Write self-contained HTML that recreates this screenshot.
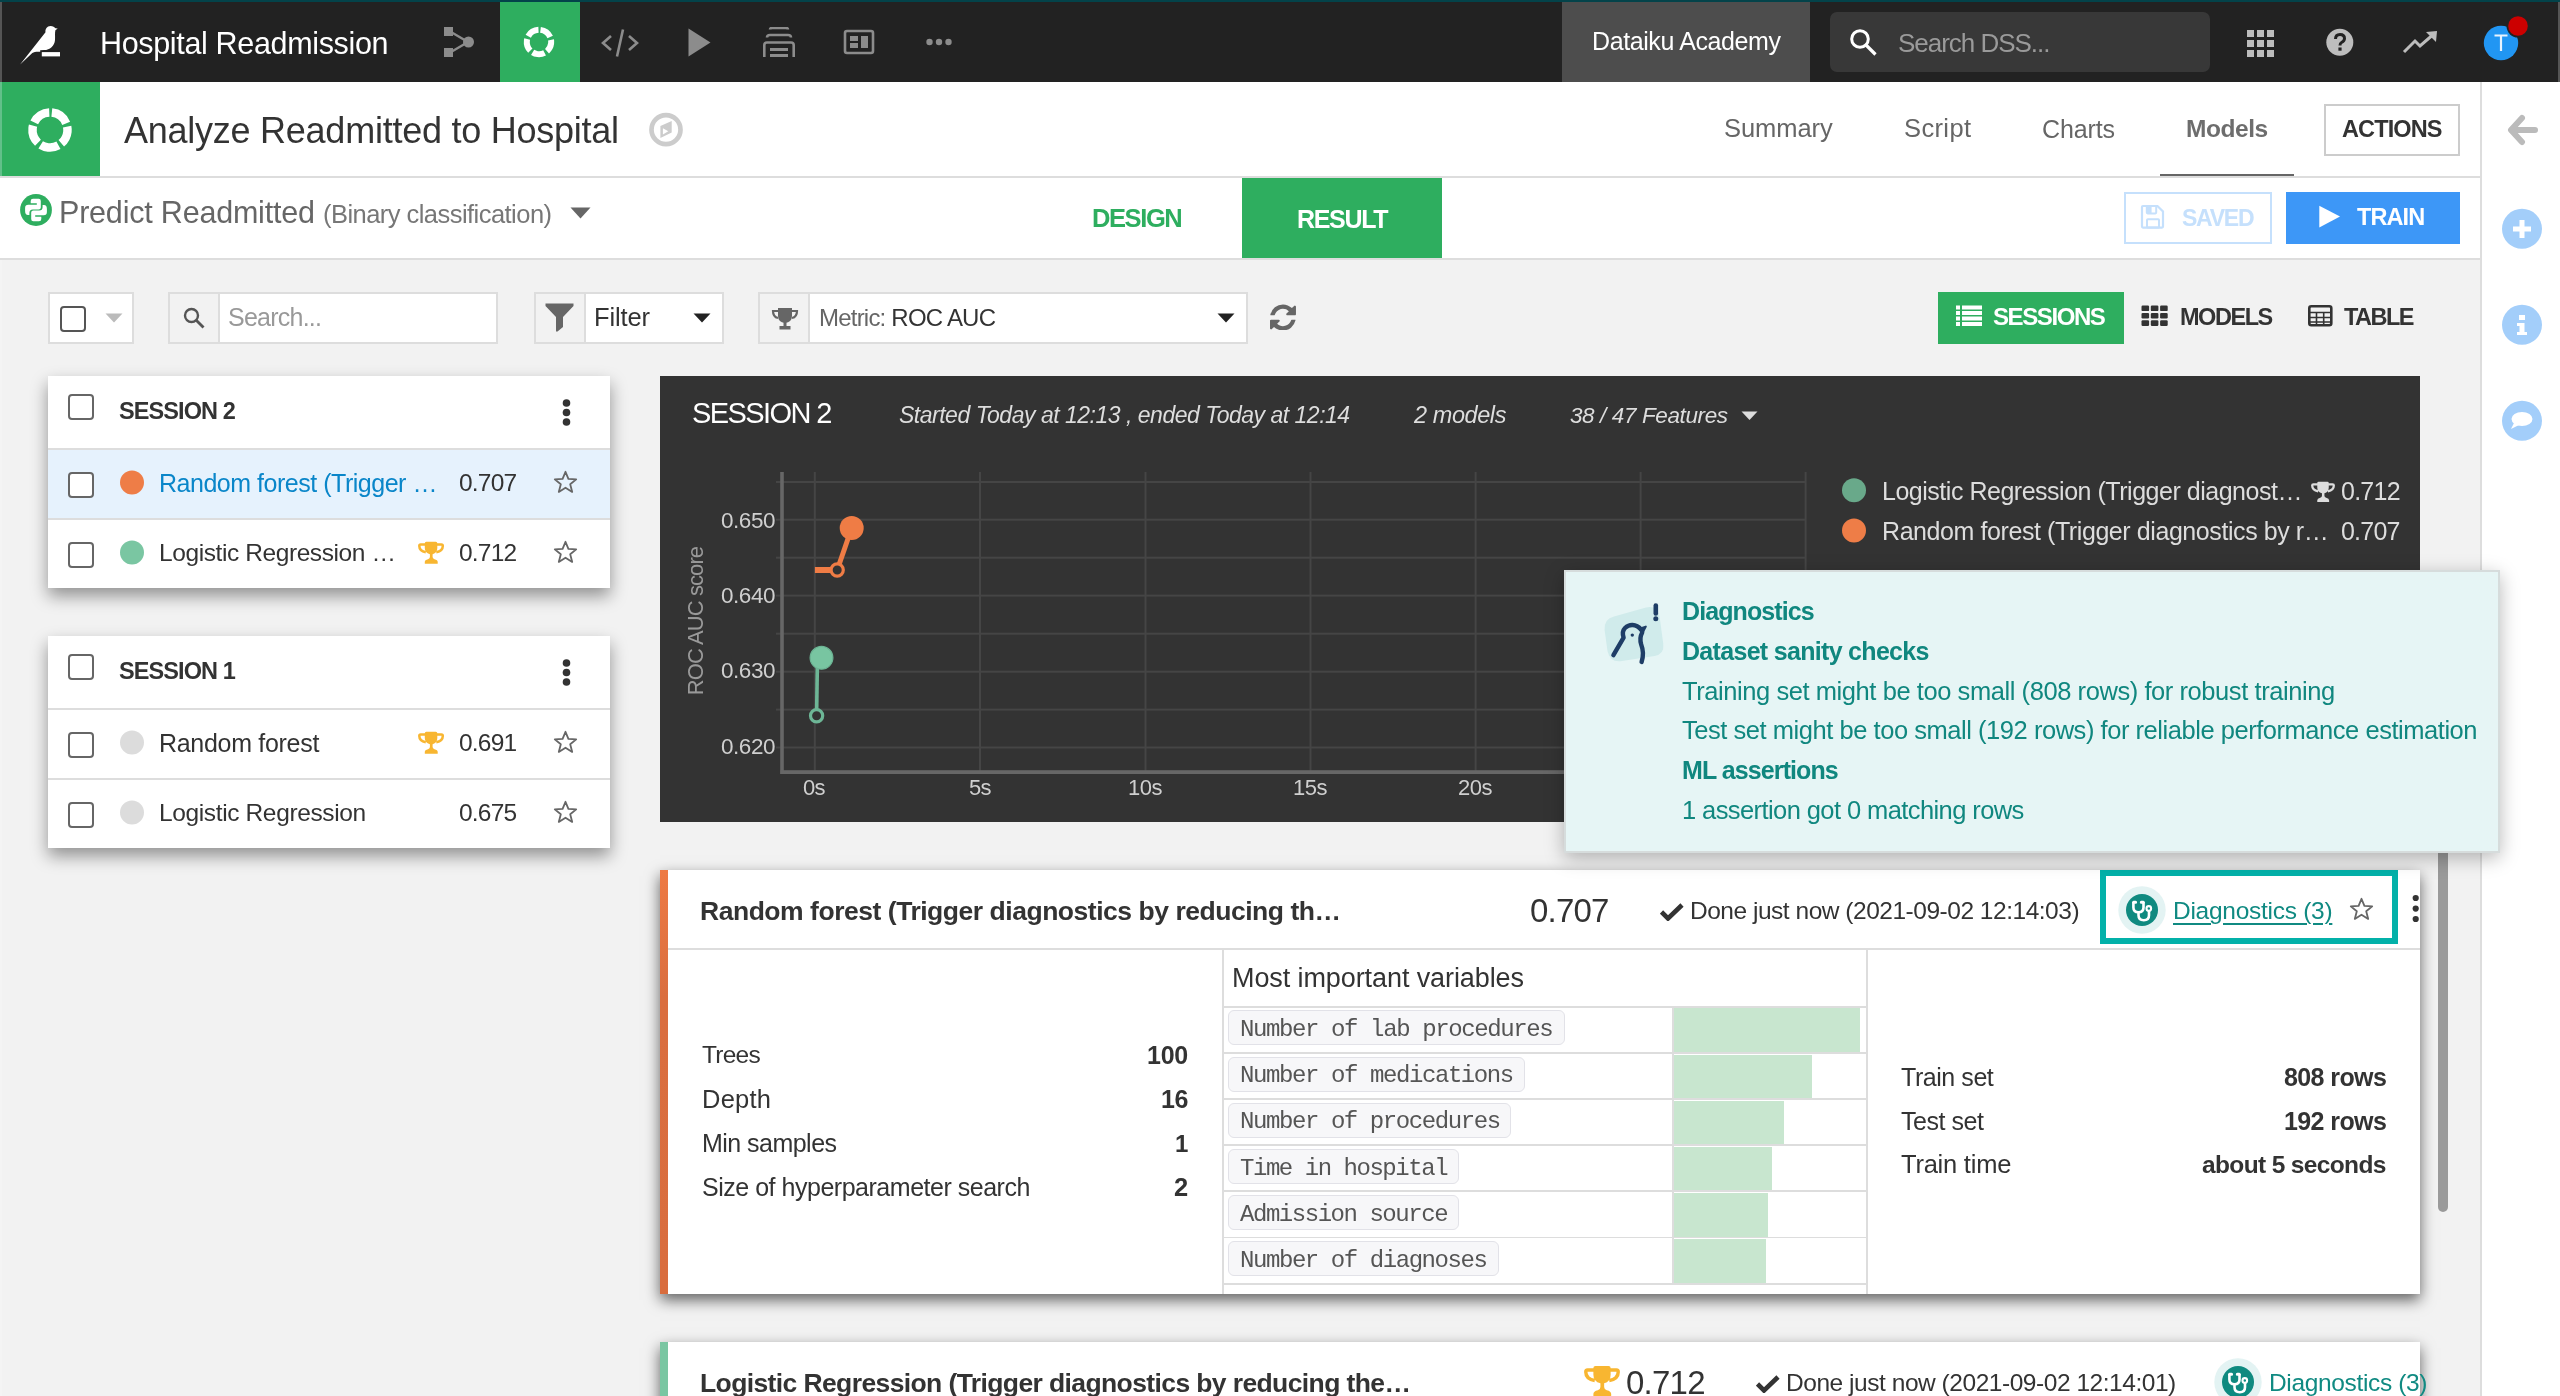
<!DOCTYPE html>
<html><head><meta charset="utf-8"><title>Dataiku DSS</title>
<style>
html,body{margin:0;padding:0;width:2560px;height:1396px;overflow:hidden;background:#f2f2f2;}
body{position:relative;font-family:"Liberation Sans",sans-serif;}
.b{position:absolute;display:block;}
.t{position:absolute;white-space:nowrap;will-change:transform;font-family:"Liberation Sans",sans-serif;}
</style></head><body>
<div class="b" style="left:0px;top:0px;width:2560px;height:82px;background:#222;"></div>
<div class="b" style="left:0px;top:0px;width:2560px;height:2px;background:#03434a;"></div>
<div class="b" style="left:0px;top:2px;width:2px;height:80px;background:#555;"></div>
<div class="b" style="left:2558px;top:2px;width:2px;height:80px;background:#555;"></div>
<svg class="b" style="left:18px;top:24px;" width="46" height="44" viewBox="0 0 46 44"><path fill="#fff" d="M2.1 40.4 L27.5 8.2 C27 5 29 2 32.5 1.9 C35 1.9 36.5 3 37.5 4.2 L39.7 4.4 L37.4 6.2 C36.7 9 37.3 12 37 16 C36.5 22 32 26 26 26.1 L22.2 26.2 L22.2 27.8 C19 27.6 16 27.8 14.3 29 Z"/><rect x="23.8" y="28.1" width="18.2" height="4.3" fill="#fff"/></svg>
<div class="t" style="left:100.20px;top:27.88px;font-size:30.5px;line-height:30.5px;color:#fff;letter-spacing:-0.34px;">Hospital Readmission</div>
<svg class="b" style="left:443px;top:27px;" width="32" height="31" viewBox="0 0 32 31"><rect x="1" y="0" width="9" height="9" fill="#8c8c8c"/><rect x="1" y="21" width="9" height="9" fill="#8c8c8c"/><circle cx="25.5" cy="15" r="5.5" fill="#8c8c8c"/><path d="M8 5 L25 15 L8 25" stroke="#8c8c8c" stroke-width="2.4" fill="none"/></svg>
<div class="b" style="left:500px;top:2px;width:80px;height:80px;background:#2eae5f;"></div>
<svg class="b" style="left:523px;top:26px;" width="32" height="32" viewBox="0 0 32 32"><circle cx="16" cy="16" r="12.2" fill="none" stroke="#fff" stroke-width="6" stroke-dasharray="12.5 2.9" transform="rotate(-83 16 16)"/></svg>
<svg class="b" style="left:600px;top:28px;" width="40" height="30" viewBox="0 0 40 30"><path d="M11 8 L3 15 L11 22 M29 8 L37 15 L29 22" stroke="#8c8c8c" stroke-width="2.6" fill="none"/><path d="M23 1.5 L17 28.5" stroke="#8c8c8c" stroke-width="2.6"/></svg>
<svg class="b" style="left:687px;top:28px;" width="25" height="30" viewBox="0 0 25 30"><path d="M1.5 0.5 L23.5 14.5 L1.5 28.5 Z" fill="#8c8c8c"/></svg>
<svg class="b" style="left:763px;top:27px;" width="32" height="31" viewBox="0 0 32 31"><path d="M7 2.5 Q7 1 9 1 L23 1 Q25 1 25 2.5" stroke="#8c8c8c" stroke-width="2.6" fill="none"/><path d="M4 10.5 Q4 8 7 8 L25 8 Q28 8 28 10.5" stroke="#8c8c8c" stroke-width="2.6" fill="none"/><path d="M1.3 30 L1.3 18 Q1.3 15.5 4 15.5 L28 15.5 Q30.7 15.5 30.7 18 L30.7 30" stroke="#8c8c8c" stroke-width="2.6" fill="none"/><rect x="7" y="21" width="18" height="3" fill="#8c8c8c"/><rect x="7" y="27" width="18" height="3" fill="#8c8c8c"/></svg>
<svg class="b" style="left:843px;top:29px;" width="32" height="26" viewBox="0 0 32 26"><rect x="2" y="2" width="28" height="22" rx="2" stroke="#8c8c8c" stroke-width="2.6" fill="none"/><rect x="7" y="7" width="8" height="5" fill="#8c8c8c"/><rect x="7" y="14" width="8" height="5" fill="#8c8c8c"/><rect x="18" y="7" width="7" height="12" fill="#8c8c8c"/></svg>
<svg class="b" style="left:925px;top:38px;" width="28" height="8" viewBox="0 0 28 8"><circle cx="4.5" cy="4" r="3.2" fill="#8c8c8c"/><circle cx="14" cy="4" r="3.2" fill="#8c8c8c"/><circle cx="23.5" cy="4" r="3.2" fill="#8c8c8c"/></svg>
<div class="b" style="left:1562px;top:2px;width:248px;height:80px;background:#4d4d4d;"></div>
<div class="t" style="left:1592.00px;top:28.63px;font-size:25.0px;line-height:25.0px;color:#fff;letter-spacing:-0.40px;">Dataiku Academy</div>
<div class="b" style="left:1830px;top:12px;width:380px;height:60px;background:#383838;border-radius:7px;"></div>
<svg class="b" style="left:1849px;top:28px;" width="29" height="29" viewBox="0 0 29 29"><circle cx="11" cy="11" r="8.3" stroke="#fff" stroke-width="3" fill="none"/><path d="M17 17 L26.5 26.5" stroke="#fff" stroke-width="3.2"/></svg>
<div class="t" style="left:1898.10px;top:29.99px;font-size:26.0px;line-height:26.0px;color:#9a9a9a;letter-spacing:-1.03px;">Search DSS...</div>
<svg class="b" style="left:2246px;top:29px;" width="29" height="29" viewBox="0 0 29 29"><rect x="1" y="1" width="7" height="7" fill="#bdbdbd"/><rect x="11" y="1" width="7" height="7" fill="#bdbdbd"/><rect x="21" y="1" width="7" height="7" fill="#bdbdbd"/><rect x="1" y="11" width="7" height="7" fill="#bdbdbd"/><rect x="11" y="11" width="7" height="7" fill="#bdbdbd"/><rect x="21" y="11" width="7" height="7" fill="#bdbdbd"/><rect x="1" y="21" width="7" height="7" fill="#bdbdbd"/><rect x="11" y="21" width="7" height="7" fill="#bdbdbd"/><rect x="21" y="21" width="7" height="7" fill="#bdbdbd"/></svg>
<svg class="b" style="left:2326px;top:28px;" width="28" height="29" viewBox="0 0 28 29"><circle cx="13.8" cy="14.2" r="13.5" fill="#bdbdbd"/><path d="M9.5 11 Q9.5 6.5 14 6.5 Q18.5 6.5 18.5 10.5 Q18.5 13 15.5 14.5 Q14 15.3 14 17.5" stroke="#222" stroke-width="3" fill="none"/><rect x="12.4" y="19.5" width="3.2" height="3.2" fill="#222"/></svg>
<svg class="b" style="left:2402px;top:30px;" width="37" height="24" viewBox="0 0 37 24"><path d="M2 22 L13 11 L18 16 L33 3" stroke="#bdbdbd" stroke-width="3" fill="none"/><path d="M24 2 L35 1 L34 12 Z" fill="#bdbdbd"/></svg>
<svg class="b" style="left:2482px;top:14px;" width="60" height="50" viewBox="0 0 60 50"><circle cx="19" cy="29" r="17.2" fill="#2196f3"/><path d="M12.5 21.5 L25.5 21.5 M19 21.5 L19 37" stroke="#e8f3fe" stroke-width="2.2"/><circle cx="36" cy="12" r="11.5" fill="#222"/><circle cx="36" cy="12" r="9.8" fill="#cc0000"/></svg>
<div class="b" style="left:0px;top:82px;width:2480px;height:94px;background:#fff;"></div>
<div class="b" style="left:2px;top:82px;width:98px;height:94px;background:#2eae5f;"></div>
<div class="b" style="left:0px;top:82px;width:2px;height:94px;background:#62c08a;"></div>
<svg class="b" style="left:27px;top:107px;" width="46" height="46" viewBox="0 0 46 46"><circle cx="23" cy="23" r="17.5" fill="none" stroke="#fff" stroke-width="8.5" stroke-dasharray="18.6 3.4" transform="rotate(-84 23 23)"/></svg>
<div class="t" style="left:123.60px;top:113.22px;font-size:36.0px;line-height:36.0px;color:#333;letter-spacing:-0.25px;">Analyze Readmitted to Hospital</div>
<svg class="b" style="left:648px;top:112px;" width="36" height="36" viewBox="0 0 36 36"><circle cx="18" cy="17.7" r="14.5" stroke="#cccccc" stroke-width="4.7" fill="none"/><path fill-rule="evenodd" d="M12.4 14.1 L23.7 9.1 L23.7 20.6 L12.4 26 Z M14.9 16.3 L20.3 19.3 L14.9 22.4 Z" fill="#cccccc"/></svg>
<div class="t" style="left:1724.00px;top:116.41px;font-size:25.5px;line-height:25.5px;color:#666;letter-spacing:-0.05px;">Summary</div>
<div class="t" style="left:1904.00px;top:116.41px;font-size:25.5px;line-height:25.5px;color:#666;letter-spacing:0.37px;">Script</div>
<div class="t" style="left:2042.00px;top:116.83px;font-size:25.0px;line-height:25.0px;color:#666;letter-spacing:-0.12px;">Charts</div>
<div class="t" style="left:2185.80px;top:117.26px;font-size:24.5px;line-height:24.5px;color:#666;font-weight:700;letter-spacing:-0.44px;opacity:0.95;">Models</div>
<div class="b" style="left:2160px;top:174px;width:134px;height:4px;background:#666;"></div>
<div class="b" style="left:2324px;top:104px;width:136px;height:52px;box-sizing:border-box;border:2px solid #ccc;background:#fff;"></div>
<div class="t" style="left:2342.00px;top:118.10px;font-size:23.5px;line-height:23.5px;color:#333;font-weight:700;letter-spacing:-0.88px;">ACTIONS</div>
<div class="b" style="left:0px;top:176px;width:2480px;height:2px;background:#ddd;"></div>
<div class="b" style="left:2480px;top:82px;width:80px;height:1314px;background:#fff;"></div>
<div class="b" style="left:2480px;top:82px;width:2px;height:1314px;background:#ddd;"></div>
<svg class="b" style="left:2506px;top:114px;" width="34" height="34" viewBox="0 0 34 34"><path d="M16 4 L5 16 L16 28" stroke="#bbb" stroke-width="6" fill="none" stroke-linecap="round" stroke-linejoin="round"/><path d="M6 16 L29 16" stroke="#bbb" stroke-width="6" stroke-linecap="round"/></svg>
<svg class="b" style="left:2502px;top:208px;" width="42" height="42" viewBox="0 0 42 42"><circle cx="20" cy="20.8" r="20" fill="#a3cefa"/><path d="M20 12 L20 30 M11 21 L29 21" stroke="#fff" stroke-width="5"/></svg>
<svg class="b" style="left:2502px;top:304px;" width="42" height="42" viewBox="0 0 42 42"><circle cx="20" cy="20.8" r="20" fill="#a3cefa"/><rect x="17" y="11" width="6" height="5" fill="#fff"/><path d="M15 19 L22.5 19 L22.5 28 L25 28 L25 31 L15 31 L15 28 L17.5 28 L17.5 22 L15 22 Z" fill="#fff"/></svg>
<svg class="b" style="left:2502px;top:400px;" width="42" height="42" viewBox="0 0 42 42"><circle cx="20" cy="20.8" r="20" fill="#a3cefa"/><ellipse cx="20" cy="19" rx="10.5" ry="7" fill="#fff"/><path d="M12 23 L9 29 L17 25 Z" fill="#fff"/></svg>
<div class="b" style="left:0px;top:178px;width:2480px;height:80px;background:#fff;"></div>
<svg class="b" style="left:19px;top:193px;" width="34" height="34" viewBox="0 0 34 34"><circle cx="17" cy="17" r="15.9" fill="#2eae5f"/><g transform="translate(17 17)"><path fill="#fff" d="M-5.3 -9 Q-5.3 -11.2 -3 -11.2 L2.7 -11.2 Q4.8 -11.2 4.8 -9 L4.8 -2.6 Q4.8 -0.6 2.6 -0.6 L-3.2 -0.6 Q-6.6 -0.6 -6.6 3 L-6.6 5.1 L-8 5.1 Q-10.9 5.1 -10.9 1 L-10.9 -2 Q-10.9 -5.2 -7.6 -5.2 L0.8 -5.2 L0.8 -6.8 L-5.3 -6.8 Z"/><path fill="#fff" transform="rotate(180)" d="M-5.3 -9 Q-5.3 -11.2 -3 -11.2 L2.7 -11.2 Q4.8 -11.2 4.8 -9 L4.8 -2.6 Q4.8 -0.6 2.6 -0.6 L-3.2 -0.6 Q-6.6 -0.6 -6.6 3 L-6.6 5.1 L-8 5.1 Q-10.9 5.1 -10.9 1 L-10.9 -2 Q-10.9 -5.2 -7.6 -5.2 L0.8 -5.2 L0.8 -6.8 L-5.3 -6.8 Z"/></g></svg>
<div class="t" style="left:59.00px;top:197.38px;font-size:30.5px;line-height:30.5px;color:#666;letter-spacing:-0.20px;">Predict Readmitted</div>
<div class="t" style="left:323.00px;top:201.61px;font-size:25.5px;line-height:25.5px;color:#777;letter-spacing:-0.54px;">(Binary classification)</div>
<svg class="b" style="left:570px;top:207px;" width="21" height="12" viewBox="0 0 21 12"><path d="M0.5 0.5 L20.5 0.5 L10.5 11.5 Z" fill="#666"/></svg>
<div class="t" style="left:1091.80px;top:206.31px;font-size:25.5px;line-height:25.5px;color:#2eae5f;font-weight:700;letter-spacing:-1.40px;">DESIGN</div>
<div class="b" style="left:1242px;top:178px;width:200px;height:80px;background:#2eae5f;"></div>
<div class="t" style="left:1297.30px;top:206.73px;font-size:25.0px;line-height:25.0px;color:#fff;font-weight:700;letter-spacing:-1.32px;">RESULT</div>
<div class="b" style="left:2124px;top:192px;width:148px;height:52px;box-sizing:border-box;border:2px solid #c5e0fc;background:#fff;"></div>
<svg class="b" style="left:2140px;top:204px;" width="26" height="28" viewBox="0 0 26 28"><path d="M3 2 L17.5 2 L23 7.5 L23 22.6 Q23 23.6 22 23.6 L3 23.6 Q2 23.6 2 22.6 L2 3 Q2 2 3 2 Z" stroke="#c5e0fc" stroke-width="2.2" fill="none"/><rect x="6.8" y="2" width="9.4" height="7.4" rx="0.8" stroke="#c5e0fc" stroke-width="2" fill="none"/><rect x="6.8" y="2" width="4.8" height="7.4" fill="#c5e0fc"/><rect x="7" y="15.3" width="12" height="8.3" rx="0.8" stroke="#c5e0fc" stroke-width="2" fill="none"/></svg>
<div class="t" style="left:2181.80px;top:206.53px;font-size:23.0px;line-height:23.0px;color:#c5e0fc;font-weight:700;letter-spacing:-1.25px;">SAVED</div>
<div class="b" style="left:2286px;top:192px;width:174px;height:52px;background:#3d97f7;"></div>
<svg class="b" style="left:2318px;top:205px;" width="24" height="24" viewBox="0 0 24 24"><path d="M1.3 0.7 L22 11.5 L1.3 22.5 Z" fill="#fff"/></svg>
<div class="t" style="left:2357.20px;top:206.10px;font-size:23.5px;line-height:23.5px;color:#fff;font-weight:700;letter-spacing:-0.92px;">TRAIN</div>
<div class="b" style="left:0px;top:258px;width:2480px;height:2px;background:#ddd;"></div>
<div class="b" style="left:0px;top:260px;width:2480px;height:1136px;background:#f2f2f2;"></div>
<div class="b" style="left:0px;top:260px;width:2px;height:1136px;background:#f4f4f4;"></div>
<div class="b" style="left:48px;top:292px;width:86px;height:52px;box-sizing:border-box;border:2px solid #ddd;background:#fff;"></div>
<div class="b" style="left:60px;top:306px;width:26px;height:26px;box-sizing:border-box;border:2px solid #555;border-radius:4px;background:#fff;"></div>
<svg class="b" style="left:105px;top:313px;" width="18" height="10" viewBox="0 0 18 10"><path d="M0.5 0.5 L17.5 0.5 L9 9.5 Z" fill="#bbb"/></svg>
<div class="b" style="left:168px;top:292px;width:330px;height:52px;box-sizing:border-box;border:2px solid #ddd;background:#fff;"></div>
<div class="b" style="left:170px;top:294px;width:48px;height:48px;background:#f2f2f2;"></div>
<div class="b" style="left:218px;top:294px;width:2px;height:48px;background:#ddd;"></div>
<svg class="b" style="left:183px;top:307px;" width="23" height="23" viewBox="0 0 23 23"><circle cx="8.5" cy="8.5" r="6.5" stroke="#555" stroke-width="2.4" fill="none"/><path d="M13 13 L20.5 20.5" stroke="#555" stroke-width="2.8"/></svg>
<div class="t" style="left:228.00px;top:305.43px;font-size:25.0px;line-height:25.0px;color:#999;letter-spacing:-0.76px;">Search...</div>
<div class="b" style="left:534px;top:292px;width:190px;height:52px;box-sizing:border-box;border:2px solid #ddd;background:#fff;"></div>
<div class="b" style="left:536px;top:294px;width:48px;height:48px;background:#f2f2f2;"></div>
<div class="b" style="left:584px;top:294px;width:2px;height:48px;background:#ddd;"></div>
<svg class="b" style="left:545px;top:303px;" width="29" height="29" viewBox="0 0 29 29"><path d="M0.5 0.5 L28.5 0.5 L28.5 3 L18 14 L18 24 L12.5 28.5 L11 28.5 L11 14 L0.5 3 Z" fill="#666"/></svg>
<div class="t" style="left:594.00px;top:304.66px;font-size:25.5px;line-height:25.5px;color:#333;letter-spacing:-0.13px;">Filter</div>
<svg class="b" style="left:693px;top:313px;" width="18" height="10" viewBox="0 0 18 10"><path d="M0.5 0.5 L17.5 0.5 L9 9.5 Z" fill="#222"/></svg>
<div class="b" style="left:758px;top:292px;width:490px;height:52px;box-sizing:border-box;border:2px solid #ddd;background:#fff;"></div>
<div class="b" style="left:760px;top:294px;width:48px;height:48px;background:#f2f2f2;"></div>
<div class="b" style="left:808px;top:294px;width:2px;height:48px;background:#ddd;"></div>
<svg class="b" style="left:771px;top:307px;" width="28" height="24" viewBox="0 0 28 24"><path d="M7 1 L21 1 L21 9 Q21 15 14 16 Q7 15 7 9 Z" fill="#666"/><path d="M7 4 L2 4 Q2 10 7 11 M21 4 L26 4 Q26 10 21 11" stroke="#666" stroke-width="2.2" fill="none"/><rect x="12.5" y="15" width="3" height="4" fill="#666"/><rect x="8.5" y="19" width="11" height="3.5" fill="#666"/></svg>
<div class="t" style="left:819.00px;top:305.68px;font-size:24.0px;line-height:24.0px;color:#333;letter-spacing:-0.79px;"><span style="color:#666">Metric:</span> ROC AUC</div>
<svg class="b" style="left:1217px;top:313px;" width="18" height="10" viewBox="0 0 18 10"><path d="M0.5 0.5 L17.5 0.5 L9 9.5 Z" fill="#222"/></svg>
<svg class="b" style="left:1269px;top:304px;" width="28" height="26" viewBox="0 0 28 26"><path transform="translate(1 0.5) scale(0.0169)" fill="#666" d="M1511 928q0 5-1 7-64 268-268 434.5T764 1536q-146 0-282.5-55T238 1324l-129 129q-19 19-45 19t-45-19-19-45V960q0-26 19-45t45-19h448q26 0 45 19t19 45-19 45l-137 137q71 66 161 102t187 36q134 0 250-65t186-179q11-17 53-117 8-23 30-23h192q13 0 22.5 9.5t9.5 22.5zm25-800v448q0 26-19 45t-45 19h-448q-26 0-45-19t-19-45 19-45l138-138Q969 256 768 256q-134 0-250 65T332 500q-11 17-53 117-8 23-30 23H50q-13 0-22.5-9.5T18 608v-7q65-268 270-434.5T768 0q146 0 284 55.5T1297 212l130-129q19-19 45-19t45 19 19 45z"/></svg>
<div class="b" style="left:1938px;top:292px;width:186px;height:52px;background:#2eae5f;"></div>
<svg class="b" style="left:1955px;top:305px;" width="28" height="22" viewBox="0 0 28 22"><rect x="1" y="0.5" width="4" height="4" fill="#fff"/><rect x="7" y="0.5" width="20" height="4" fill="#fff"/><rect x="1" y="6" width="4" height="4" fill="#fff"/><rect x="7" y="6" width="20" height="4" fill="#fff"/><rect x="1" y="11.5" width="4" height="4" fill="#fff"/><rect x="7" y="11.5" width="20" height="4" fill="#fff"/><rect x="1" y="17" width="4" height="4" fill="#fff"/><rect x="7" y="17" width="20" height="4" fill="#fff"/></svg>
<div class="t" style="left:1993.00px;top:305.38px;font-size:24.0px;line-height:24.0px;color:#fff;font-weight:700;letter-spacing:-1.41px;">SESSIONS</div>
<svg class="b" style="left:2141px;top:305px;" width="27" height="22" viewBox="0 0 27 22"><rect x="0.5" y="0.5" width="7.6" height="5.6" rx="1.2" fill="#333"/><rect x="9.8" y="0.5" width="7.6" height="5.6" rx="1.2" fill="#333"/><rect x="19.1" y="0.5" width="7.6" height="5.6" rx="1.2" fill="#333"/><rect x="0.5" y="7.9" width="7.6" height="5.6" rx="1.2" fill="#333"/><rect x="9.8" y="7.9" width="7.6" height="5.6" rx="1.2" fill="#333"/><rect x="19.1" y="7.9" width="7.6" height="5.6" rx="1.2" fill="#333"/><rect x="0.5" y="15.3" width="7.6" height="5.6" rx="1.2" fill="#333"/><rect x="9.8" y="15.3" width="7.6" height="5.6" rx="1.2" fill="#333"/><rect x="19.1" y="15.3" width="7.6" height="5.6" rx="1.2" fill="#333"/></svg>
<div class="t" style="left:2179.60px;top:305.80px;font-size:23.5px;line-height:23.5px;color:#333;font-weight:700;letter-spacing:-1.46px;">MODELS</div>
<svg class="b" style="left:2308px;top:305px;" width="25" height="22" viewBox="0 0 25 22"><rect x="1.3" y="1.3" width="22" height="19" rx="2" stroke="#333" stroke-width="2.6" fill="none"/><path d="M1 7.5 L24 7.5 M1 12.5 L24 12.5 M1 17 L24 17 M8.5 7 L8.5 21 M15.7 7 L15.7 21" stroke="#333" stroke-width="1.6"/></svg>
<div class="t" style="left:2343.50px;top:305.80px;font-size:23.5px;line-height:23.5px;color:#333;font-weight:700;letter-spacing:-1.53px;">TABLE</div>
<div class="b" style="left:48px;top:376px;width:562px;height:212px;background:#fff;box-shadow:0 8px 16px rgba(0,0,0,0.4);"></div>
<div class="b" style="left:68px;top:394px;width:26px;height:26px;box-sizing:border-box;border:2px solid #666;border-radius:4px;background:#fff;"></div>
<div class="t" style="left:118.80px;top:400.10px;font-size:23.5px;line-height:23.5px;color:#333;font-weight:700;letter-spacing:-0.92px;">SESSION 2</div>
<svg class="b" style="left:562px;top:399px;" width="10" height="28" viewBox="0 0 10 28"><circle cx="4.5" cy="4" r="3.8" fill="#333"/><circle cx="4.5" cy="13.5" r="3.8" fill="#333"/><circle cx="4.5" cy="23" r="3.8" fill="#333"/></svg>
<div class="b" style="left:48px;top:448px;width:562px;height:2px;background:#ddd;"></div>
<div class="b" style="left:48px;top:518px;width:562px;height:2px;background:#ddd;"></div>
<div class="b" style="left:48px;top:450px;width:562px;height:68px;background:#e6f2fd;"></div>
<div class="b" style="left:68px;top:471.5px;width:26px;height:26px;box-sizing:border-box;border:2px solid #666;border-radius:4px;background:#fff;"></div>
<svg class="b" style="left:119px;top:470px;" width="26" height="26" viewBox="0 0 26 26"><circle cx="13" cy="12.5" r="12" fill="#ee7d47"/></svg>
<div class="t" style="left:159.00px;top:470.83px;font-size:25.0px;line-height:25.0px;color:#0a86c9;letter-spacing:-0.48px;">Random forest (Trigger …</div>
<div class="t" style="left:458.50px;top:471.26px;font-size:24.5px;line-height:24.5px;color:#333;letter-spacing:-0.78px;">0.707</div>
<svg class="b" style="left:553px;top:469.5px;" width="25" height="24" viewBox="0 0 25 24"><path d="M12.5 1.8 L15.4 8.9 L23.2 9.4 L17.2 14.3 L19.2 21.9 L12.5 17.7 L5.8 21.9 L7.8 14.3 L1.8 9.4 L9.6 8.9 Z" stroke="#666" stroke-width="1.8" fill="none" stroke-linejoin="round"/></svg>
<div class="b" style="left:68px;top:541.5px;width:26px;height:26px;box-sizing:border-box;border:2px solid #666;border-radius:4px;background:#fff;"></div>
<svg class="b" style="left:119px;top:540px;" width="26" height="26" viewBox="0 0 26 26"><circle cx="13" cy="12.5" r="12" fill="#7ac6a2"/></svg>
<div class="t" style="left:159.00px;top:541.26px;font-size:24.5px;line-height:24.5px;color:#333;letter-spacing:-0.41px;">Logistic Regression …</div>
<svg class="b" style="left:418px;top:541px;" width="27" height="25" viewBox="0 0 27 25"><g transform="scale(1.0)"><path d="M8.3 0.7 L17.8 0.7 Q19.3 0.7 19.3 2.2 L19.3 7 Q19.3 12 14.6 13.2 L14.6 16 Q14.6 17.6 16.5 18.3 Q19.7 19 19.7 21 L19.7 22.8 L6.8 22.8 L6.8 21 Q6.8 19 10 18.3 Q11.9 17.6 11.9 16 L11.9 13.2 Q6.8 12 6.8 7 L6.8 2.2 Q6.8 0.7 8.3 0.7 Z" fill="#f8b631"/><path d="M7.5 3.6 L2.6 3.6 Q1.3 3.6 1.3 5 Q1.3 10 7.8 11.2 M18.6 3.6 L23.5 3.6 Q24.8 3.6 24.8 5 Q24.8 10 18.3 11.2" stroke="#f8b631" stroke-width="2.5" fill="none"/></g></svg>
<div class="t" style="left:458.50px;top:541.26px;font-size:24.5px;line-height:24.5px;color:#333;letter-spacing:-0.78px;">0.712</div>
<svg class="b" style="left:553px;top:539.5px;" width="25" height="24" viewBox="0 0 25 24"><path d="M12.5 1.8 L15.4 8.9 L23.2 9.4 L17.2 14.3 L19.2 21.9 L12.5 17.7 L5.8 21.9 L7.8 14.3 L1.8 9.4 L9.6 8.9 Z" stroke="#666" stroke-width="1.8" fill="none" stroke-linejoin="round"/></svg>
<div class="b" style="left:48px;top:636px;width:562px;height:212px;background:#fff;box-shadow:0 8px 16px rgba(0,0,0,0.4);"></div>
<div class="b" style="left:68px;top:654px;width:26px;height:26px;box-sizing:border-box;border:2px solid #666;border-radius:4px;background:#fff;"></div>
<div class="t" style="left:118.80px;top:660.10px;font-size:23.5px;line-height:23.5px;color:#333;font-weight:700;letter-spacing:-0.92px;">SESSION 1</div>
<svg class="b" style="left:562px;top:659px;" width="10" height="28" viewBox="0 0 10 28"><circle cx="4.5" cy="4" r="3.8" fill="#333"/><circle cx="4.5" cy="13.5" r="3.8" fill="#333"/><circle cx="4.5" cy="23" r="3.8" fill="#333"/></svg>
<div class="b" style="left:48px;top:708px;width:562px;height:2px;background:#ddd;"></div>
<div class="b" style="left:48px;top:778px;width:562px;height:2px;background:#ddd;"></div>
<div class="b" style="left:68px;top:731.5px;width:26px;height:26px;box-sizing:border-box;border:2px solid #666;border-radius:4px;background:#fff;"></div>
<svg class="b" style="left:119px;top:730px;" width="26" height="26" viewBox="0 0 26 26"><circle cx="13" cy="12.5" r="12" fill="#dcdcdc"/></svg>
<div class="t" style="left:159.00px;top:730.83px;font-size:25.0px;line-height:25.0px;color:#333;letter-spacing:-0.30px;">Random forest</div>
<svg class="b" style="left:418px;top:731px;" width="27" height="25" viewBox="0 0 27 25"><g transform="scale(1.0)"><path d="M8.3 0.7 L17.8 0.7 Q19.3 0.7 19.3 2.2 L19.3 7 Q19.3 12 14.6 13.2 L14.6 16 Q14.6 17.6 16.5 18.3 Q19.7 19 19.7 21 L19.7 22.8 L6.8 22.8 L6.8 21 Q6.8 19 10 18.3 Q11.9 17.6 11.9 16 L11.9 13.2 Q6.8 12 6.8 7 L6.8 2.2 Q6.8 0.7 8.3 0.7 Z" fill="#f8b631"/><path d="M7.5 3.6 L2.6 3.6 Q1.3 3.6 1.3 5 Q1.3 10 7.8 11.2 M18.6 3.6 L23.5 3.6 Q24.8 3.6 24.8 5 Q24.8 10 18.3 11.2" stroke="#f8b631" stroke-width="2.5" fill="none"/></g></svg>
<div class="t" style="left:458.50px;top:731.26px;font-size:24.5px;line-height:24.5px;color:#333;letter-spacing:-0.78px;">0.691</div>
<svg class="b" style="left:553px;top:729.5px;" width="25" height="24" viewBox="0 0 25 24"><path d="M12.5 1.8 L15.4 8.9 L23.2 9.4 L17.2 14.3 L19.2 21.9 L12.5 17.7 L5.8 21.9 L7.8 14.3 L1.8 9.4 L9.6 8.9 Z" stroke="#666" stroke-width="1.8" fill="none" stroke-linejoin="round"/></svg>
<div class="b" style="left:68px;top:801.5px;width:26px;height:26px;box-sizing:border-box;border:2px solid #666;border-radius:4px;background:#fff;"></div>
<svg class="b" style="left:119px;top:800px;" width="26" height="26" viewBox="0 0 26 26"><circle cx="13" cy="12.5" r="12" fill="#dcdcdc"/></svg>
<div class="t" style="left:159.00px;top:801.26px;font-size:24.5px;line-height:24.5px;color:#333;letter-spacing:-0.37px;">Logistic Regression</div>
<div class="t" style="left:458.50px;top:801.26px;font-size:24.5px;line-height:24.5px;color:#333;letter-spacing:-0.78px;">0.675</div>
<svg class="b" style="left:553px;top:799.5px;" width="25" height="24" viewBox="0 0 25 24"><path d="M12.5 1.8 L15.4 8.9 L23.2 9.4 L17.2 14.3 L19.2 21.9 L12.5 17.7 L5.8 21.9 L7.8 14.3 L1.8 9.4 L9.6 8.9 Z" stroke="#666" stroke-width="1.8" fill="none" stroke-linejoin="round"/></svg>
<svg class="b" style="left:660px;top:376px;" width="1760" height="446" viewBox="0 0 1760 446"><rect x="0" y="0" width="1760" height="446" fill="#333"/><rect x="116" y="105.0" width="1030" height="2" fill="#454545"/><rect x="116" y="142.7" width="1030" height="2" fill="#454545"/><rect x="116" y="180.7" width="1030" height="2" fill="#454545"/><rect x="116" y="218.6" width="1030" height="2" fill="#454545"/><rect x="116" y="256.7" width="1030" height="2" fill="#454545"/><rect x="116" y="294.7" width="1030" height="2" fill="#454545"/><rect x="116" y="332.6" width="1030" height="2" fill="#454545"/><rect x="116" y="370.5" width="1030" height="2" fill="#454545"/><rect x="153.8" y="96" width="2" height="299" fill="#454545"/><rect x="319.0" y="96" width="2" height="299" fill="#454545"/><rect x="484.5" y="96" width="2" height="299" fill="#454545"/><rect x="649.5" y="96" width="2" height="299" fill="#454545"/><rect x="814.6" y="96" width="2" height="299" fill="#454545"/><rect x="979.6" y="96" width="2" height="299" fill="#454545"/><rect x="1144.6" y="96" width="2" height="299" fill="#454545"/><rect x="120.20000000000005" y="96" width="3.6" height="302" fill="#676767"/><rect x="120.5" y="394.20000000000005" width="1025.5" height="3.8" fill="#676767"/><polyline points="154.9,194.0 177.2,194.0" stroke="#ef7c45" stroke-width="6" fill="none"/><polyline points="177.2,194.0 191.7,152.0" stroke="#ef7c45" stroke-width="5" fill="none"/><circle cx="177.20000000000005" cy="194" r="6.1" fill="#333" stroke="#ef7c45" stroke-width="3.2"/><circle cx="191.70000000000005" cy="152" r="12" fill="#ef7c45"/><polyline points="156.6,339.8 157.4,286.0" stroke="#6db696" stroke-width="3.6" fill="none"/><circle cx="156.60000000000002" cy="339.79999999999995" r="6.1" fill="#333" stroke="#6db696" stroke-width="3.2"/><circle cx="161.5" cy="281.79999999999995" r="11.4" fill="#78c5a1" stroke="#6cb494" stroke-width="1.2"/></svg>
<div class="t" style="left:691.90px;top:399.35px;font-size:29.0px;line-height:29.0px;color:#fff;letter-spacing:-1.60px;">SESSION 2</div>
<div class="t" style="left:899.30px;top:404.43px;font-size:23.0px;line-height:23.0px;color:#ddd;font-style:italic;letter-spacing:-0.49px;">Started Today at 12:13 , ended Today at 12:14</div>
<div class="t" style="left:1413.98px;top:404.00px;font-size:23.5px;line-height:23.5px;color:#ddd;font-style:italic;letter-spacing:-0.42px;">2 models</div>
<div class="t" style="left:1570.00px;top:404.85px;font-size:22.5px;line-height:22.5px;color:#ddd;font-style:italic;letter-spacing:-0.39px;">38 / 47 Features</div>
<svg class="b" style="left:1741px;top:411px;" width="17" height="10" viewBox="0 0 17 10"><path d="M0.5 0.5 L16.5 0.5 L8.5 9 Z" fill="#ddd"/></svg>
<div class="t" style="left:721.10px;top:509.75px;font-size:22.5px;line-height:22.5px;color:#cfcfcf;letter-spacing:-0.45px;">0.650</div>
<div class="t" style="left:721.10px;top:584.75px;font-size:22.5px;line-height:22.5px;color:#cfcfcf;letter-spacing:-0.45px;">0.640</div>
<div class="t" style="left:721.10px;top:659.75px;font-size:22.5px;line-height:22.5px;color:#cfcfcf;letter-spacing:-0.45px;">0.630</div>
<div class="t" style="left:721.10px;top:735.75px;font-size:22.5px;line-height:22.5px;color:#cfcfcf;letter-spacing:-0.45px;">0.620</div>
<div class="t" style="left:803.45px;top:776.57px;font-size:22.0px;line-height:22.0px;color:#cfcfcf;letter-spacing:-0.71px;">0s</div>
<div class="t" style="left:968.75px;top:776.57px;font-size:22.0px;line-height:22.0px;color:#cfcfcf;letter-spacing:-0.71px;">5s</div>
<div class="t" style="left:1128.25px;top:776.57px;font-size:22.0px;line-height:22.0px;color:#cfcfcf;letter-spacing:-0.49px;">10s</div>
<div class="t" style="left:1293.25px;top:776.57px;font-size:22.0px;line-height:22.0px;color:#cfcfcf;letter-spacing:-0.49px;">15s</div>
<div class="t" style="left:1458.25px;top:776.57px;font-size:22.0px;line-height:22.0px;color:#cfcfcf;letter-spacing:-0.49px;">20s</div>
<div class="t" style="left:621px;top:609px;width:150px;height:24px;line-height:24px;font-size:22px;color:#999;text-align:center;transform:rotate(-90deg);letter-spacing:-0.9px;">ROC AUC score</div>
<svg class="b" style="left:1841px;top:478px;" width="26" height="26" viewBox="0 0 26 26"><circle cx="13" cy="12.2" r="12" fill="#69a98a"/></svg>
<div class="t" style="left:1882.00px;top:479.03px;font-size:25.0px;line-height:25.0px;color:#ddd;letter-spacing:-0.48px;">Logistic Regression (Trigger diagnost…</div>
<svg class="b" style="left:2311px;top:481px;" width="24" height="23" viewBox="0 0 24 23"><g transform="scale(0.92)"><path d="M8.3 0.7 L17.8 0.7 Q19.3 0.7 19.3 2.2 L19.3 7 Q19.3 12 14.6 13.2 L14.6 16 Q14.6 17.6 16.5 18.3 Q19.7 19 19.7 21 L19.7 22.8 L6.8 22.8 L6.8 21 Q6.8 19 10 18.3 Q11.9 17.6 11.9 16 L11.9 13.2 Q6.8 12 6.8 7 L6.8 2.2 Q6.8 0.7 8.3 0.7 Z" fill="#ddd"/><path d="M7.5 3.6 L2.6 3.6 Q1.3 3.6 1.3 5 Q1.3 10 7.8 11.2 M18.6 3.6 L23.5 3.6 Q24.8 3.6 24.8 5 Q24.8 10 18.3 11.2" stroke="#ddd" stroke-width="2.5" fill="none"/></g></svg>
<div class="t" style="left:2340.60px;top:479.03px;font-size:25.0px;line-height:25.0px;color:#ddd;letter-spacing:-0.74px;">0.712</div>
<svg class="b" style="left:1841px;top:518px;" width="26" height="26" viewBox="0 0 26 26"><circle cx="13" cy="12.4" r="12" fill="#ee7d47"/></svg>
<div class="t" style="left:1882.00px;top:519.33px;font-size:25.0px;line-height:25.0px;color:#ddd;letter-spacing:-0.42px;">Random forest (Trigger diagnostics by r…</div>
<div class="t" style="left:2340.60px;top:519.33px;font-size:25.0px;line-height:25.0px;color:#ddd;letter-spacing:-0.79px;">0.707</div>
<div class="b" style="left:660px;top:870px;width:1760px;height:424px;background:#fff;box-shadow:0 6px 14px rgba(0,0,0,0.6);"></div>
<div class="b" style="left:660px;top:870px;width:8px;height:424px;background:linear-gradient(#ee7a44, #da6e3f 30%, #d96d3e);"></div>
<div class="t" style="left:700.00px;top:898.06px;font-size:26.5px;line-height:26.5px;color:#333;font-weight:700;letter-spacing:-0.47px;">Random forest (Trigger diagnostics by reducing th…</div>
<div class="t" style="left:1530.20px;top:894.16px;font-size:33.0px;line-height:33.0px;color:#333;letter-spacing:-0.80px;">0.707</div>
<svg class="b" style="left:1660px;top:903px;" width="24" height="18" viewBox="0 0 24 18"><path d="M1.5 9 L8 15.5 L22 2" stroke="#333" stroke-width="4.6" fill="none"/></svg>
<div class="t" style="left:1690.00px;top:899.06px;font-size:24.5px;line-height:24.5px;color:#333;letter-spacing:-0.48px;">Done just now (2021-09-02 12:14:03)</div>
<svg class="b" style="left:2116.9px;top:885px;" width="50" height="50" viewBox="0 0 50 50"><circle cx="25" cy="25" r="23.7" fill="#e3f3f3"/><circle cx="25" cy="25" r="16" fill="#0f8a80"/><path d="M16.4 17 L16.4 22.5 Q16.4 27.2 21.5 27.2 Q26.5 27.2 26.5 22.5 L26.5 17" stroke="#fff" stroke-width="2.6" fill="none"/><path d="M16.6 17.3 L18.6 17.3 M26.3 17.3 L24.3 17.3" stroke="#fff" stroke-width="3" stroke-linecap="round"/><path d="M21.5 27 L21.5 30.3 Q21.5 35.2 26.8 35.2 Q32 35.2 32 30.3 L32 26" stroke="#fff" stroke-width="2.6" fill="none"/><circle cx="31.8" cy="23.4" r="2.3" fill="#0f8a80" stroke="#fff" stroke-width="2.1"/></svg>
<div class="t" style="left:2172.90px;top:899.06px;font-size:24.5px;line-height:24.5px;color:#108a82;letter-spacing:-0.27px;text-decoration:underline;text-decoration-thickness:1.5px;text-underline-offset:4px;">Diagnostics (3)</div>
<svg class="b" style="left:2349px;top:897px;" width="25" height="24" viewBox="0 0 25 24"><path d="M12.5 1.8 L15.4 8.9 L23.2 9.4 L17.2 14.3 L19.2 21.9 L12.5 17.7 L5.8 21.9 L7.8 14.3 L1.8 9.4 L9.6 8.9 Z" stroke="#666" stroke-width="1.8" fill="none" stroke-linejoin="round"/></svg>
<svg class="b" style="left:2410px;top:892px;" width="12" height="34" viewBox="0 0 12 34"><circle cx="5.7" cy="6" r="3.1" fill="#333"/><circle cx="5.7" cy="16.6" r="3.1" fill="#333"/><circle cx="5.7" cy="27" r="3.1" fill="#333"/></svg>
<div class="b" style="left:2100px;top:870px;width:298px;height:74px;box-sizing:border-box;border:6px solid #03b1a9;"></div>
<div class="b" style="left:668px;top:948px;width:1752px;height:2px;background:#ddd;"></div>
<div class="b" style="left:1222px;top:950px;width:2px;height:344px;background:#ddd;"></div>
<div class="b" style="left:1866px;top:950px;width:2px;height:344px;background:#ddd;"></div>
<div class="t" style="left:702.00px;top:1043.36px;font-size:24.5px;line-height:24.5px;color:#333;letter-spacing:-0.76px;">Trees</div>
<div class="t" style="left:1147.30px;top:1042.93px;font-size:25.0px;line-height:25.0px;color:#333;font-weight:700;letter-spacing:-0.24px;">100</div>
<div class="t" style="left:702.00px;top:1086.51px;font-size:25.5px;line-height:25.5px;color:#333;letter-spacing:0.24px;">Depth</div>
<div class="t" style="left:1161.00px;top:1086.93px;font-size:25.0px;line-height:25.0px;color:#333;font-weight:700;letter-spacing:-0.31px;">16</div>
<div class="t" style="left:702.00px;top:1130.93px;font-size:25.0px;line-height:25.0px;color:#333;letter-spacing:-0.53px;">Min samples</div>
<div class="t" style="left:1175.18px;top:1131.78px;font-size:24.0px;line-height:24.0px;color:#333;font-weight:700;">1</div>
<div class="t" style="left:702.00px;top:1174.93px;font-size:25.0px;line-height:25.0px;color:#333;letter-spacing:-0.48px;">Size of hyperparameter search</div>
<div class="t" style="left:1174.35px;top:1174.51px;font-size:25.5px;line-height:25.5px;color:#333;font-weight:700;">2</div>
<div class="t" style="left:1232.00px;top:964.84px;font-size:27.0px;line-height:27.0px;color:#333;letter-spacing:-0.09px;">Most important variables</div>
<div class="b" style="left:1224px;top:1006px;width:642px;height:1.6px;background:#ddd;"></div>
<div class="b" style="left:1224px;top:1052.1px;width:642px;height:1.6px;background:#ddd;"></div>
<div class="b" style="left:1672px;top:1007.6px;width:1.5px;height:46px;background:#ddd;"></div>
<div class="b" style="left:1673.6px;top:1008.4px;width:186.20000000000005px;height:43.8px;background:#c8e6cf;"></div>
<div class="b" style="left:1228.4px;top:1010.4px;width:337.0px;height:35px;box-sizing:border-box;border:1.6px solid #e2e2e8;border-radius:6px;background:#f7f7f9;"></div>
<div class="t" style="left:1239.50px;top:1018.21px;font-size:24.0px;line-height:24.0px;color:#555;font-family:'Liberation Mono', monospace;letter-spacing:-1.39px;">Number of lab procedures</div>
<div class="b" style="left:1224px;top:1098.2px;width:642px;height:1.6px;background:#ddd;"></div>
<div class="b" style="left:1672px;top:1053.7px;width:1.5px;height:46px;background:#ddd;"></div>
<div class="b" style="left:1673.6px;top:1054.5px;width:138.4000000000001px;height:43.8px;background:#c8e6cf;"></div>
<div class="b" style="left:1228.4px;top:1056.5px;width:297.0px;height:35px;box-sizing:border-box;border:1.6px solid #e2e2e8;border-radius:6px;background:#f7f7f9;"></div>
<div class="t" style="left:1239.50px;top:1064.31px;font-size:24.0px;line-height:24.0px;color:#555;font-family:'Liberation Mono', monospace;letter-spacing:-1.41px;">Number of medications</div>
<div class="b" style="left:1224px;top:1144.3px;width:642px;height:1.6px;background:#ddd;"></div>
<div class="b" style="left:1672px;top:1099.8px;width:1.5px;height:46px;background:#ddd;"></div>
<div class="b" style="left:1673.6px;top:1100.6px;width:110.30000000000018px;height:43.8px;background:#c8e6cf;"></div>
<div class="b" style="left:1228.4px;top:1102.6px;width:282.5999999999999px;height:35px;box-sizing:border-box;border:1.6px solid #e2e2e8;border-radius:6px;background:#f7f7f9;"></div>
<div class="t" style="left:1239.50px;top:1110.41px;font-size:24.0px;line-height:24.0px;color:#555;font-family:'Liberation Mono', monospace;letter-spacing:-1.42px;">Number of procedures</div>
<div class="b" style="left:1224px;top:1190.4px;width:642px;height:1.6px;background:#ddd;"></div>
<div class="b" style="left:1672px;top:1145.9px;width:1.5px;height:46px;background:#ddd;"></div>
<div class="b" style="left:1673.6px;top:1146.7px;width:98.30000000000018px;height:43.8px;background:#c8e6cf;"></div>
<div class="b" style="left:1228.4px;top:1148.7px;width:230.79999999999995px;height:35px;box-sizing:border-box;border:1.6px solid #e2e2e8;border-radius:6px;background:#f7f7f9;"></div>
<div class="t" style="left:1239.50px;top:1156.51px;font-size:24.0px;line-height:24.0px;color:#555;font-family:'Liberation Mono', monospace;letter-spacing:-1.46px;">Time in hospital</div>
<div class="b" style="left:1224px;top:1236.5px;width:642px;height:1.6px;background:#ddd;"></div>
<div class="b" style="left:1672px;top:1192.0px;width:1.5px;height:46px;background:#ddd;"></div>
<div class="b" style="left:1673.6px;top:1192.8px;width:94.30000000000018px;height:43.8px;background:#c8e6cf;"></div>
<div class="b" style="left:1228.4px;top:1194.8px;width:230.79999999999995px;height:35px;box-sizing:border-box;border:1.6px solid #e2e2e8;border-radius:6px;background:#f7f7f9;"></div>
<div class="t" style="left:1239.50px;top:1202.61px;font-size:24.0px;line-height:24.0px;color:#555;font-family:'Liberation Mono', monospace;letter-spacing:-1.46px;">Admission source</div>
<div class="b" style="left:1224px;top:1282.6px;width:642px;height:1.6px;background:#ddd;"></div>
<div class="b" style="left:1672px;top:1238.1px;width:1.5px;height:46px;background:#ddd;"></div>
<div class="b" style="left:1673.6px;top:1238.8999999999999px;width:92.0px;height:43.8px;background:#c8e6cf;"></div>
<div class="b" style="left:1228.4px;top:1240.8999999999999px;width:270.79999999999995px;height:35px;box-sizing:border-box;border:1.6px solid #e2e2e8;border-radius:6px;background:#f7f7f9;"></div>
<div class="t" style="left:1239.50px;top:1248.71px;font-size:24.0px;line-height:24.0px;color:#555;font-family:'Liberation Mono', monospace;letter-spacing:-1.43px;">Number of diagnoses</div>
<div class="b" style="left:1224px;top:1283px;width:642px;height:1.6px;background:#ddd;"></div>
<div class="t" style="left:1901.00px;top:1065.23px;font-size:25.0px;line-height:25.0px;color:#333;letter-spacing:-0.44px;">Train set</div>
<div class="t" style="left:2283.50px;top:1065.23px;font-size:25.0px;line-height:25.0px;color:#333;font-weight:700;letter-spacing:-0.60px;">808 rows</div>
<div class="t" style="left:1901.00px;top:1108.93px;font-size:25.0px;line-height:25.0px;color:#333;letter-spacing:-0.45px;">Test set</div>
<div class="t" style="left:2283.50px;top:1108.93px;font-size:25.0px;line-height:25.0px;color:#333;font-weight:700;letter-spacing:-0.60px;">192 rows</div>
<div class="t" style="left:1901.00px;top:1152.21px;font-size:25.5px;line-height:25.5px;color:#333;letter-spacing:-0.23px;">Train time</div>
<div class="t" style="left:2201.90px;top:1153.06px;font-size:24.5px;line-height:24.5px;color:#333;font-weight:700;letter-spacing:-0.64px;">about 5 seconds</div>
<div class="b" style="left:660px;top:1342px;width:1760px;height:200px;background:#fff;box-shadow:0 6px 14px rgba(0,0,0,0.6);"></div>
<div class="b" style="left:660px;top:1342px;width:8px;height:200px;background:#7ac6a2;"></div>
<div class="t" style="left:700.00px;top:1370.06px;font-size:26.5px;line-height:26.5px;color:#333;font-weight:700;letter-spacing:-0.61px;">Logistic Regression (Trigger diagnostics by reducing the…</div>
<svg class="b" style="left:1584px;top:1365px;" width="37" height="34" viewBox="0 0 37 34"><g transform="scale(1.38)"><path d="M8.3 0.7 L17.8 0.7 Q19.3 0.7 19.3 2.2 L19.3 7 Q19.3 12 14.6 13.2 L14.6 16 Q14.6 17.6 16.5 18.3 Q19.7 19 19.7 21 L19.7 22.8 L6.8 22.8 L6.8 21 Q6.8 19 10 18.3 Q11.9 17.6 11.9 16 L11.9 13.2 Q6.8 12 6.8 7 L6.8 2.2 Q6.8 0.7 8.3 0.7 Z" fill="#f8b631"/><path d="M7.5 3.6 L2.6 3.6 Q1.3 3.6 1.3 5 Q1.3 10 7.8 11.2 M18.6 3.6 L23.5 3.6 Q24.8 3.6 24.8 5 Q24.8 10 18.3 11.2" stroke="#f8b631" stroke-width="2.5" fill="none"/></g></svg>
<div class="t" style="left:1626.00px;top:1366.16px;font-size:33.0px;line-height:33.0px;color:#333;letter-spacing:-0.75px;">0.712</div>
<svg class="b" style="left:1755.7px;top:1375px;" width="24" height="18" viewBox="0 0 24 18"><path d="M1.5 9 L8 15.5 L22 2" stroke="#333" stroke-width="4.6" fill="none"/></svg>
<div class="t" style="left:1785.70px;top:1371.06px;font-size:24.5px;line-height:24.5px;color:#333;letter-spacing:-0.46px;">Done just now (2021-09-02 12:14:01)</div>
<svg class="b" style="left:2213px;top:1357px;" width="50" height="50" viewBox="0 0 50 50"><circle cx="25" cy="25" r="23.7" fill="#e3f3f3"/><circle cx="25" cy="25" r="16" fill="#0f8a80"/><path d="M16.4 17 L16.4 22.5 Q16.4 27.2 21.5 27.2 Q26.5 27.2 26.5 22.5 L26.5 17" stroke="#fff" stroke-width="2.6" fill="none"/><path d="M16.6 17.3 L18.6 17.3 M26.3 17.3 L24.3 17.3" stroke="#fff" stroke-width="3" stroke-linecap="round"/><path d="M21.5 27 L21.5 30.3 Q21.5 35.2 26.8 35.2 Q32 35.2 32 30.3 L32 26" stroke="#fff" stroke-width="2.6" fill="none"/><circle cx="31.8" cy="23.4" r="2.3" fill="#0f8a80" stroke="#fff" stroke-width="2.1"/></svg>
<div class="t" style="left:2269.00px;top:1371.06px;font-size:24.5px;line-height:24.5px;color:#108a82;letter-spacing:-0.35px;">Diagnostics (3)</div>
<div class="b" style="left:2437.5px;top:800px;width:10.5px;height:412px;background:#9a9a9a;border-radius:5px;"></div>
<div class="b" style="left:1564px;top:569.5px;width:935.5px;height:283.5px;box-sizing:border-box;background:#e6f5f5;border:2px solid #d6dcdc;box-shadow:0 5px 18px rgba(0,0,0,0.28);"></div>
<svg class="b" style="left:1600px;top:600px;" width="66" height="66" viewBox="0 0 66 66"><path d="M4.6 30 Q3.8 19 14 16.5 L46 7.5 Q57 5 59.5 16 L63.3 44 Q64.5 54 54.5 56 L22 61 Q10 63 7.5 51 Z" fill="#d0ebeb"/><path d="M13.4 55.2 L23.6 37.6 Q21.6 31.5 25 28 Q28.5 24.8 32.5 25 Q37.5 25.3 41 29.5" stroke="#1e3d66" stroke-width="4.4" fill="none" stroke-linecap="round" stroke-linejoin="round"/><path d="M39.5 28.8 L45.8 26.6 L42.2 33.5 Z" fill="#1e3d66" stroke="#1e3d66" stroke-width="2" stroke-linejoin="round"/><path d="M42.2 32.5 Q39.2 38 41.2 44.5 Q44.5 53 41.6 62" stroke="#1e3d66" stroke-width="4.4" fill="none" stroke-linecap="round"/><circle cx="32.3" cy="35.1" r="1.7" fill="#1e3d66"/><path d="M55.8 5.5 L55.8 13.5" stroke="#1e3d66" stroke-width="4.6" stroke-linecap="round"/><circle cx="55.8" cy="18.8" r="2.5" fill="#1e3d66"/></svg>
<div class="t" style="left:1682.20px;top:599.03px;font-size:25.0px;line-height:25.0px;color:#10877f;font-weight:700;letter-spacing:-0.90px;">Diagnostics</div>
<div class="t" style="left:1682.20px;top:638.73px;font-size:25.0px;line-height:25.0px;color:#10877f;font-weight:700;letter-spacing:-0.69px;">Dataset sanity checks</div>
<div class="t" style="left:1682.20px;top:678.51px;font-size:25.5px;line-height:25.5px;color:#10877f;letter-spacing:-0.43px;">Training set might be too small (808 rows) for robust training</div>
<div class="t" style="left:1682.20px;top:718.21px;font-size:25.5px;line-height:25.5px;color:#10877f;letter-spacing:-0.46px;">Test set might be too small (192 rows) for reliable performance estimation</div>
<div class="t" style="left:1682.20px;top:758.43px;font-size:25.0px;line-height:25.0px;color:#10877f;font-weight:700;letter-spacing:-0.91px;">ML assertions</div>
<div class="t" style="left:1682.20px;top:798.01px;font-size:25.5px;line-height:25.5px;color:#10877f;letter-spacing:-0.59px;">1 assertion got 0 matching rows</div>
</body></html>
